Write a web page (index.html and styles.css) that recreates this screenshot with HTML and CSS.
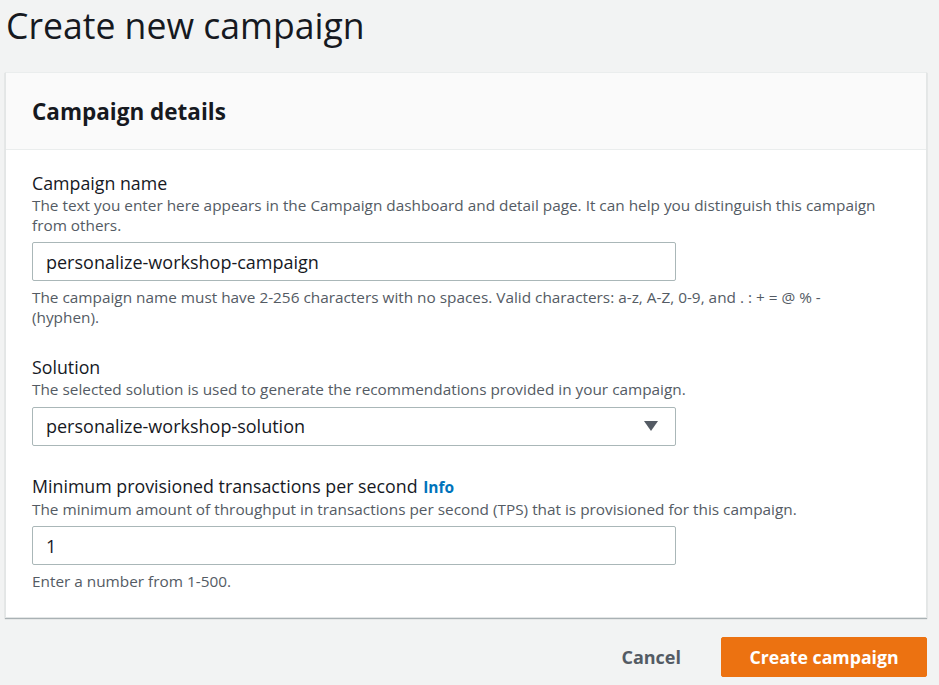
FILE: index.html
```html
<!DOCTYPE html>
<html>
<head>
<meta charset="utf-8">
<link rel="stylesheet" href="styles.css">
</head>
<body>
<div class="page">
  <h1 class="title">Create new campaign</h1>
  <div class="card">
    <div class="card-header"><h2>Campaign details</h2></div>
    <div class="card-body">
      <div class="field">
        <div class="label">Campaign name</div>
        <div class="desc">The text you enter here appears in the Campaign dashboard and detail page. It can help you distinguish this campaign from others.</div>
        <div class="input">personalize-workshop-campaign</div>
        <div class="hint">The campaign name must have 2-256 characters with no spaces. Valid characters: a-z, A-Z, 0-9, and . : + = @ % - (hyphen).</div>
      </div>
      <div class="field">
        <div class="label">Solution</div>
        <div class="desc">The selected solution is used to generate the recommendations provided in your campaign.</div>
        <div class="input select"><span>personalize-workshop-solution</span>
          <svg class="caret" width="14" height="10" viewBox="0 0 14 10"><path d="M0 0 H14 L7 10 Z" fill="#545b64"/></svg>
        </div>
      </div>
      <div class="field">
        <div class="label">Minimum provisioned transactions per second <a class="info">Info</a></div>
        <div class="desc">The minimum amount of throughput in transactions per second (TPS) that is provisioned for this campaign.</div>
        <div class="input">1</div>
        <div class="hint">Enter a number from 1-500.</div>
      </div>
    </div>
  </div>
  <div class="actions">
    <button class="btn-link">Cancel</button>
    <button class="btn-primary">Create campaign</button>
  </div>
</div>
</body>
</html>
```
FILE: styles.css
```css
html, body {
  margin: 0;
  padding: 0;
  background: #f2f3f3;
}
body {
  font-family: "Open Sans", "Noto Sans", sans-serif;
  color: #16191f;
}
.page {
  width: 922px;
  padding-left: 5px;
}
.title {
  margin: 0;
  font-size: 35.6px;
  font-weight: 400;
  line-height: 50px;
  padding-left: 1px;
  height: 72px;
}
.card {
  background: #fff;
  border: 1px solid #e3e6e6;
  border-top-color: #eaeded;
  box-shadow: 0 1px 1px 0 rgba(0,28,36,0.3);
}
.card-header {
  background: #fafafa;
  border-bottom: 1px solid #eaeded;
  height: 76px;
  display: flex;
  align-items: center;
  padding-left: 26px;
}
.card-header h2 {
  margin: 0;
  font-size: 22.5px;
  font-weight: 700;
}
.card-body {
  padding: 21px 26px 25px;
  display: flex;
  flex-direction: column;
  gap: 28px;
}
.label {
  font-size: 17.8px;
  line-height: 24px;
  margin-bottom: 1px;
  color: #16191f;
}
.desc, .hint {
  font-size: 15.35px;
  line-height: 19.5px;
  color: #545b64;
}
.hint {
  margin-top: 7px;
  max-width: 820px;
}
.desc { margin-bottom: 7px; }
.input {
  width: 644px;
  box-sizing: border-box;
  height: 39px;
  border: 1px solid #aab7b8;
  border-radius: 2px;
  padding: 0 14px 0 13px;
  display: flex;
  align-items: center;
  font-size: 18px;
  color: #16191f;
}
.select { justify-content: space-between; }
.caret { margin-right: 3px; }
.info {
  color: #0073bb;
  font-weight: 700;
  font-size: 15.5px;
  margin-left: 1px;
}
.actions {
  display: flex;
  justify-content: flex-end;
  align-items: center;
  margin-top: 19px;
  gap: 40px;
}
.btn-link {
  background: none;
  border: none;
  font-family: inherit;
  font-weight: 700;
  font-size: 18px;
  color: #545b64;
  padding: 0;
}
.btn-primary {
  background: #ec7211;
  border: 1px solid #ec7211;
  border-radius: 2px;
  color: #fff;
  font-family: inherit;
  font-weight: 700;
  font-size: 17.7px;
  width: 206px;
  height: 40px;
}
```
